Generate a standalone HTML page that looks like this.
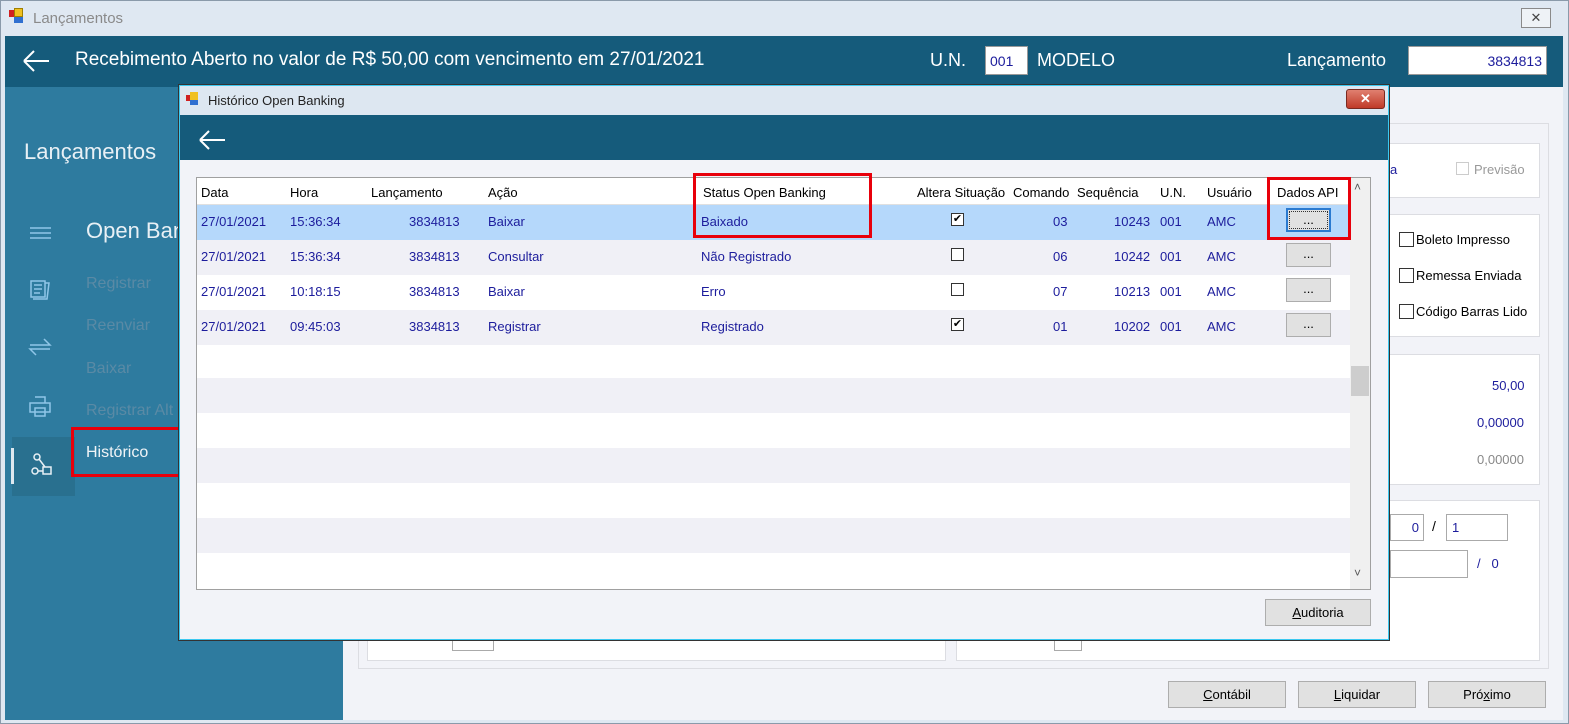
<!DOCTYPE html>
<html><head><meta charset="utf-8"><style>
*{box-sizing:border-box;margin:0;padding:0}
body{width:1569px;height:724px;overflow:hidden;background:#fff;font-family:"Liberation Sans",sans-serif;position:relative}
.a{position:absolute}
.t{position:absolute;white-space:nowrap}
.btn{position:absolute;background:#e1e1e1;border:1px solid #adadad;font-size:13px;text-align:center;color:#000}
.cb{position:absolute;width:13px;height:13px;border:1px solid #333;background:#fff}
.g{font-size:13px;color:#1c1c9c}
.red{position:absolute;border:3px solid #e8000b}
</style></head><body>
<!-- outer window -->
<div class="a" style="left:0;top:0;width:1569px;height:724px;background:#dfe8f2;border:1px solid #8a9aaa"></div>
<div class="a" style="left:9px;top:10px;width:7px;height:7px;background:#d02020"></div>
<div class="a" style="left:14px;top:8px;width:9px;height:9px;background:#f0c020;border:1px solid #a08000"></div>
<div class="a" style="left:14px;top:17px;width:9px;height:6px;background:#3070d0"></div>
<div class="t" style="left:33px;top:10px;font-size:15px;color:#8a8a8a">Lançamentos</div>
<div class="a" style="left:1521px;top:8px;width:30px;height:20px;border:1px solid #8a8a8a;background:#eef2f6;font-size:13px;text-align:center;line-height:18px;color:#444">✕</div>
<div class="a" style="left:5px;top:36px;width:1558px;height:684px;background:#f2f3f8"></div>
<div class="a" style="left:5px;top:36px;width:1558px;height:51px;background:#155b7b"></div>
<svg class="a" style="left:22px;top:48px" width="30" height="26"><path d="M2 13H27M2 13L12 3M2 13L12 23" stroke="#fff" stroke-width="2" fill="none"/></svg>
<div class="t" style="left:75px;top:49px;font-size:19px;color:#fff">Recebimento Aberto no valor de R$ 50,00 com vencimento em 27/01/2021</div>
<div class="t" style="left:930px;top:50px;font-size:18px;color:#fff">U.N.</div>
<div class="a" style="left:985px;top:46px;width:43px;height:29px;background:#fff;border:1px solid #999;font-size:14px;color:#1c1c9c;padding:6px 0 0 4px">001</div>
<div class="t" style="left:1037px;top:50px;font-size:18px;color:#fff">MODELO</div>
<div class="t" style="left:1287px;top:50px;font-size:18px;color:#fff">Lançamento</div>
<div class="a" style="left:1408px;top:46px;width:139px;height:29px;background:#fff;border:1px solid #999;font-size:14px;color:#1c1c9c;padding:6px 4px 0 0;text-align:right">3834813</div>
<!-- sidebar -->
<div class="a" style="left:5px;top:87px;width:338px;height:633px;background:#2e7b9f"></div>
<div class="t" style="left:24px;top:139px;font-size:22px;color:#e8f0f5">Lançamentos</div>
<div class="t" style="left:86px;top:218px;font-size:22px;color:#e8f0f5">Open Banking</div>
<div class="t" style="left:86px;top:275px;font-size:16px;color:#5a8aa5">Registrar</div>
<div class="t" style="left:86px;top:317px;font-size:16px;color:#5a8aa5">Reenviar</div>
<div class="t" style="left:86px;top:360px;font-size:16px;color:#5a8aa5">Baixar</div>
<div class="t" style="left:86px;top:402px;font-size:16px;color:#5a8aa5">Registrar Alt</div>
<div class="a" style="left:12px;top:437px;width:63px;height:59px;background:#29708f"></div>
<div class="a" style="left:11px;top:448px;width:3px;height:36px;background:#dfe8ef"></div>
<div class="t" style="left:86px;top:444px;font-size:16px;color:#f0f4f7">Histórico</div>
<svg class="a" style="left:27px;top:222px" width="26" height="20"><path d="M3 6H24M3 11H24M3 16H24" stroke="#8fc6e8" stroke-width="1.5"/></svg>
<svg class="a" style="left:27px;top:277px" width="26" height="24"><path d="M4 4H18V20H4Z M18 6H22L20 22H6 M7 8H15M7 12H15M7 16H13" stroke="#8fc6e8" stroke-width="1.5" fill="none"/></svg>
<svg class="a" style="left:27px;top:334px" width="26" height="26"><path d="M3 11H23L17 5M23 15H3L9 21" stroke="#8fc6e8" stroke-width="1.5" fill="none"/></svg>
<svg class="a" style="left:27px;top:394px" width="26" height="24"><path d="M8 3H18V9M3 9H23V18H3Z M8 14H18V22H8Z" stroke="#8fc6e8" stroke-width="1.5" fill="none"/></svg>
<svg class="a" style="left:28px;top:452px" width="26" height="26"><circle cx="9" cy="5" r="3" stroke="#e8f0f5" stroke-width="1.5" fill="none"/><circle cx="7" cy="19" r="3" stroke="#e8f0f5" stroke-width="1.5" fill="none"/><path d="M10 19H15V15H23V22H15V19M11 7L17 15" stroke="#e8f0f5" stroke-width="1.5" fill="none"/></svg>
<div class="red" style="left:71px;top:427px;width:110px;height:50px"></div>
<!-- background panels -->
<div class="a" style="left:358px;top:123px;width:1191px;height:546px;border:1px solid #dcdde2;background:#f2f3f8"></div>
<div class="a" style="left:1370px;top:143px;width:170px;height:55px;border:1px solid #dcdde2;background:#fff"></div>
<div class="t" style="left:1390px;top:162px;font-size:13px;color:#1c1c9c">a</div>
<div class="cb" style="left:1456px;top:162px;border-color:#ccc"></div>
<div class="t" style="left:1474px;top:162px;font-size:13px;color:#999">Previsão</div>
<div class="a" style="left:1370px;top:214px;width:170px;height:123px;border:1px solid #dcdde2;background:#fff"></div>
<div class="cb" style="left:1399px;top:232px;width:15px;height:15px"></div><div class="t" style="left:1416px;top:232px;font-size:13px">Boleto Impresso</div>
<div class="cb" style="left:1399px;top:268px;width:15px;height:15px"></div><div class="t" style="left:1416px;top:268px;font-size:13px">Remessa Enviada</div>
<div class="cb" style="left:1399px;top:304px;width:15px;height:15px"></div><div class="t" style="left:1416px;top:304px;font-size:13px">Código Barras Lido</div>
<div class="a" style="left:1370px;top:354px;width:170px;height:131px;border:1px solid #dcdde2;background:#fff"></div>
<div class="t" style="left:1492px;top:378px;font-size:13px;color:#1c1c9c">50,00</div>
<div class="t" style="left:1477px;top:415px;font-size:13px;color:#1c1c9c">0,00000</div>
<div class="t" style="left:1477px;top:452px;font-size:13px;color:#888">0,00000</div>
<div class="a" style="left:367px;top:500px;width:579px;height:161px;border:1px solid #dcdde2;background:#fff"></div>
<div class="a" style="left:956px;top:500px;width:584px;height:161px;border:1px solid #dcdde2;background:#fff"></div>
<div class="a" style="left:452px;top:632px;width:42px;height:19px;border:1px solid #aaa"></div>
<div class="a" style="left:1054px;top:632px;width:28px;height:19px;border:1px solid #aaa"></div>
<div class="a" style="left:1390px;top:514px;width:34px;height:27px;border:1px solid #aaa;background:#fff;font-size:13px;color:#1c1c9c;text-align:right;padding:5px 4px 0 0">0</div>
<div class="t" style="left:1432px;top:518px;font-size:14px">/</div>
<div class="a" style="left:1446px;top:514px;width:62px;height:27px;border:1px solid #aaa;background:#fff;font-size:13px;color:#1c1c9c;padding:5px 0 0 5px">1</div>
<div class="a" style="left:1390px;top:550px;width:78px;height:28px;border:1px solid #aaa;background:#fff"></div>
<div class="t" style="left:1477px;top:556px;font-size:13px;color:#1c1c9c">/ &nbsp;&nbsp;0</div>
<div class="btn" style="left:1168px;top:681px;width:118px;height:27px;line-height:25px"><u>C</u>ontábil</div>
<div class="btn" style="left:1298px;top:681px;width:118px;height:27px;line-height:25px"><u>L</u>iquidar</div>
<div class="btn" style="left:1428px;top:681px;width:118px;height:27px;line-height:25px">Pró<u>x</u>imo</div>
<!-- dialog -->
<div class="a" style="left:178px;top:84px;width:1212px;height:557px;background:#dde7f1;border:1px solid #333;box-shadow:0 0 0 1px #3cc8f0 inset"></div>
<div class="a" style="left:186px;top:95px;width:6px;height:6px;background:#d02020"></div>
<div class="a" style="left:190px;top:92px;width:8px;height:8px;background:#f0c020"></div>
<div class="a" style="left:190px;top:100px;width:8px;height:5px;background:#3070d0"></div>
<div class="t" style="left:208px;top:93px;font-size:13px;color:#222">Histórico Open Banking</div>
<div class="a" style="left:1346px;top:89px;width:39px;height:20px;background:linear-gradient(#e08070,#c03a28);border:1px solid #7a2a20;border-radius:3px;color:#fff;font-size:13px;text-align:center;line-height:18px;font-weight:bold">✕</div>
<div class="a" style="left:180px;top:115px;width:1208px;height:524px;background:#f2f3f8"></div>
<div class="a" style="left:180px;top:115px;width:1208px;height:45px;background:#155b7b"></div>
<svg class="a" style="left:198px;top:129px" width="30" height="22"><path d="M2 11H27M2 11L11 2M2 11L11 20" stroke="#fff" stroke-width="2" fill="none"/></svg>
<div class="a" style="left:196px;top:177px;width:1175px;height:413px;background:#fff;border:1px solid #a0a0a0"></div>
<div class="a" style="left:197px;top:378px;width:1153px;height:35px;background:#f0f0f6"></div>
<div class="a" style="left:197px;top:448px;width:1153px;height:35px;background:#f0f0f6"></div>
<div class="a" style="left:197px;top:518px;width:1153px;height:35px;background:#f0f0f6"></div>
<div class="a" style="left:197px;top:240px;width:1153px;height:35px;background:#f0f0f6"></div>
<div class="a" style="left:197px;top:310px;width:1153px;height:35px;background:#f0f0f6"></div>
<div class="a" style="left:197px;top:205px;width:1153px;height:35px;background:#b5d8fb"></div>
<div class="a" style="left:197px;top:204px;width:1153px;height:1px;background:#e0e0e0"></div>
<div class="a" style="left:1350px;top:178px;width:20px;height:411px;background:#f0f0f0"></div>
<div class="a" style="left:1351px;top:366px;width:18px;height:30px;background:#cdcdcd"></div>
<div class="t" style="left:1354px;top:180px;font-size:12px;color:#555">˄</div>
<div class="t" style="left:1354px;top:566px;font-size:12px;color:#555">˅</div>
<div style="font-size:13px;color:#000">
<div class="t" style="left:201px;top:185px">Data</div><div class="t" style="left:290px;top:185px">Hora</div><div class="t" style="left:371px;top:185px">Lançamento</div><div class="t" style="left:488px;top:185px">Ação</div><div class="t" style="left:703px;top:185px">Status Open Banking</div><div class="t" style="left:917px;top:185px">Altera Situação</div><div class="t" style="left:1013px;top:185px">Comando</div><div class="t" style="left:1077px;top:185px">Sequência</div><div class="t" style="left:1160px;top:185px">U.N.</div><div class="t" style="left:1207px;top:185px">Usuário</div><div class="t" style="left:1277px;top:185px">Dados API</div>
</div>
<div class="g">
<div class="t" style="left:201px;top:214px">27/01/2021</div><div class="t" style="left:290px;top:214px">15:36:34</div><div class="t" style="left:409px;top:214px">3834813</div><div class="t" style="left:488px;top:214px">Baixar</div><div class="t" style="left:701px;top:214px">Baixado</div><div class="t" style="left:1053px;top:214px">03</div><div class="t" style="left:1114px;top:214px">10243</div><div class="t" style="left:1160px;top:214px">001</div><div class="t" style="left:1207px;top:214px">AMC</div>
<div class="t" style="left:201px;top:249px">27/01/2021</div><div class="t" style="left:290px;top:249px">15:36:34</div><div class="t" style="left:409px;top:249px">3834813</div><div class="t" style="left:488px;top:249px">Consultar</div><div class="t" style="left:701px;top:249px">Não Registrado</div><div class="t" style="left:1053px;top:249px">06</div><div class="t" style="left:1114px;top:249px">10242</div><div class="t" style="left:1160px;top:249px">001</div><div class="t" style="left:1207px;top:249px">AMC</div>
<div class="t" style="left:201px;top:284px">27/01/2021</div><div class="t" style="left:290px;top:284px">10:18:15</div><div class="t" style="left:409px;top:284px">3834813</div><div class="t" style="left:488px;top:284px">Baixar</div><div class="t" style="left:701px;top:284px">Erro</div><div class="t" style="left:1053px;top:284px">07</div><div class="t" style="left:1114px;top:284px">10213</div><div class="t" style="left:1160px;top:284px">001</div><div class="t" style="left:1207px;top:284px">AMC</div>
<div class="t" style="left:201px;top:319px">27/01/2021</div><div class="t" style="left:290px;top:319px">09:45:03</div><div class="t" style="left:409px;top:319px">3834813</div><div class="t" style="left:488px;top:319px">Registrar</div><div class="t" style="left:701px;top:319px">Registrado</div><div class="t" style="left:1053px;top:319px">01</div><div class="t" style="left:1114px;top:319px">10202</div><div class="t" style="left:1160px;top:319px">001</div><div class="t" style="left:1207px;top:319px">AMC</div>
</div>
<div class="cb" style="left:951px;top:213px;font-size:11px;line-height:11px;text-align:center">✔</div>
<div class="cb" style="left:951px;top:248px"></div>
<div class="cb" style="left:951px;top:283px"></div>
<div class="cb" style="left:951px;top:318px;font-size:11px;line-height:11px;text-align:center">✔</div>
<div class="btn" style="left:1286px;top:208px;width:45px;height:24px;line-height:20px;border:2px solid #2a7ad0;outline:1px dotted #333;outline-offset:-4px">...</div>
<div class="btn" style="left:1286px;top:243px;width:45px;height:24px;line-height:20px">...</div>
<div class="btn" style="left:1286px;top:278px;width:45px;height:24px;line-height:20px">...</div>
<div class="btn" style="left:1286px;top:313px;width:45px;height:24px;line-height:20px">...</div>
<div class="red" style="left:693px;top:173px;width:179px;height:65px"></div>
<div class="red" style="left:1267px;top:177px;width:84px;height:63px"></div>
<div class="btn" style="left:1265px;top:599px;width:106px;height:27px;line-height:25px"><u>A</u>uditoria</div>
</body></html>
